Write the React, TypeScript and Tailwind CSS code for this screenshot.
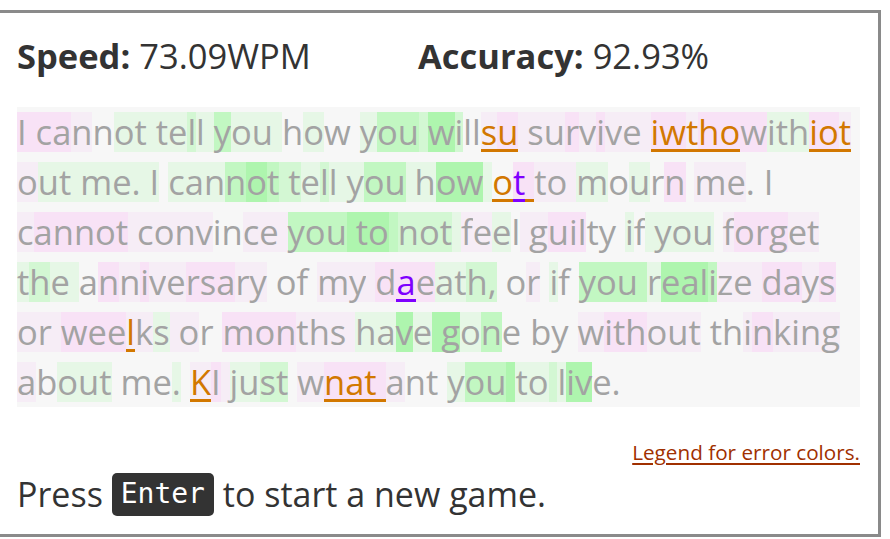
import React from "react";

type Mark = [number, number, "o" | "v"];
type Line = { t: string; b: string; m: Mark[] };

const LINES: Line[] = [
  {
    t: "I cannot tell you how you willsu survive iwthowithiot",
    b: "PPPPp." + "gggggGggHggg" + ".g..gHHGKG.." + "pPpppPpPppp" + "PPpPPP" + "gggPPp",
    m: [
      [30, 31, "o"],
      [41, 45, "o"],
      [50, 52, "o"],
    ],
  },
  {
    t: "out me. I cannot tell you how ot to mourn me. I",
    b: "pggggggg" + "g.gggHKHG" + "GgGgg" + "gHHg" + "gKKg" + ".PPppp" + "g.g.P." + "pp...",
    m: [
      [30, 30, "o"],
      [31, 31, "v"],
      [32, 32, "o"],
    ],
  },
  {
    t: "cannot convince you to not feel guilty if you forget",
    b: "pPPPPP" + "ppppp..ppp" + "HHHKKKHGGGg" + "ppg.p" + "pPPP..." + "g.g" + "ggg." + "pPPPpp",
    m: [],
  },
  {
    t: "the anniversary of my daeath, or if you realize days",
    b: "gGgg" + ".PpPppPPPpp" + "...." + "ppp" + "PPPggGG" + "..p." + "g.." + "HHHH" + "gKKKHpp" + "p" + "PPpP",
    m: [[23, 23, "v"]],
  },
  {
    t: "or weelks or months have gone by without thinking",
    b: "ppp" + "PPPppg" + "pp.." + "PPPppp" + "p" + "ggKg" + "K" + "KgH." + "...." + "pPPPppp" + "." + "..pPpppp",
    m: [[6, 6, "o"]],
  },
  {
    t: "about me. KI just wnat ant you to live.",
    b: "p.ggg" + "...g." + "pPp" + "ggGG" + "." + "pPPPP" + "p..." + "gHHK" + "ggG" + "gKK..",
    m: [
      [10, 10, "o"],
      [19, 22, "o"],
    ],
  },
];

const BG: Record<string, string> = {
  p: "bg-[#f6edf6]",
  P: "bg-[#f8e2f6]",
  ".": "",
  g: "bg-[#e6f7e6]",
  G: "bg-[#d3f7d3]",
  H: "bg-[#c2f7c2]",
  K: "bg-[#aef5ae]",
};

function markAt(line: Line, i: number): "o" | "v" | null {
  for (const [a, b, k] of line.m) if (i >= a && i <= b) return k;
  return null;
}

function TextLine({ line }: { line: Line }) {
  return (
    <div className="flex h-[50px] items-center">
      {line.t.split("").map((ch, i) => {
        const code = line.b[i] ?? ".";
        const mk = markAt(line, i);
        const color =
          mk === "o"
            ? "text-[#d27800] shadow-[inset_0_-3px_0_#d27800]"
            : mk === "v"
            ? "text-[#7f00ff] shadow-[inset_0_-3px_0_#7f00ff]"
            : "text-[#a3a3a3]";
        return (
          <span
            key={i}
            className={`inline-block h-[40px] shrink-0 whitespace-pre leading-[40px] ${BG[code] ?? ""} ${color}`}
          >
            {ch}
          </span>
        );
      })}
    </div>
  );
}

export default function App() {
  return (
    <div className="h-[539px] w-[890px] overflow-hidden bg-white pt-[10px] font-['Open_Sans',sans-serif]">
      <div className="-ml-[3px] h-[527px] w-[884px] border-[3px] border-[#8a8a8a] pl-[17px] pr-[18px]">
        <div className="mt-[23px] flex h-[40px] items-center text-[34.5px] leading-[40px] text-[#333]">
          <div className="w-[401px] shrink-0">
            <span className="font-bold">Speed:</span> 73.09WPM
          </div>
          <div>
            <span className="font-bold">Accuracy:</span> 92.93%
          </div>
        </div>
        <div className="mt-[31px] bg-[#f7f7f7] text-[34.5px]">
          {LINES.map((l, i) => (
            <TextLine key={i} line={l} />
          ))}
        </div>
        <div className="mt-[33px] flex h-[24px] justify-end text-[20.7px] leading-[24px]">
          <span className="text-[#a03000] underline decoration-[2px] underline-offset-[3px]">
            Legend for error colors.
          </span>
        </div>
        <div className="mt-[8px] flex h-[44px] items-center text-[34px] text-[#333]">
          <span className="whitespace-pre">Press </span>
          <span className="inline-flex h-[43px] items-center rounded-[5px] bg-[#333] px-[9px] font-['DejaVu_Sans_Mono',monospace] text-[28px] text-white">
            Enter
          </span>
          <span className="whitespace-pre"> to start a new game.</span>
        </div>
      </div>
    </div>
  );
}
